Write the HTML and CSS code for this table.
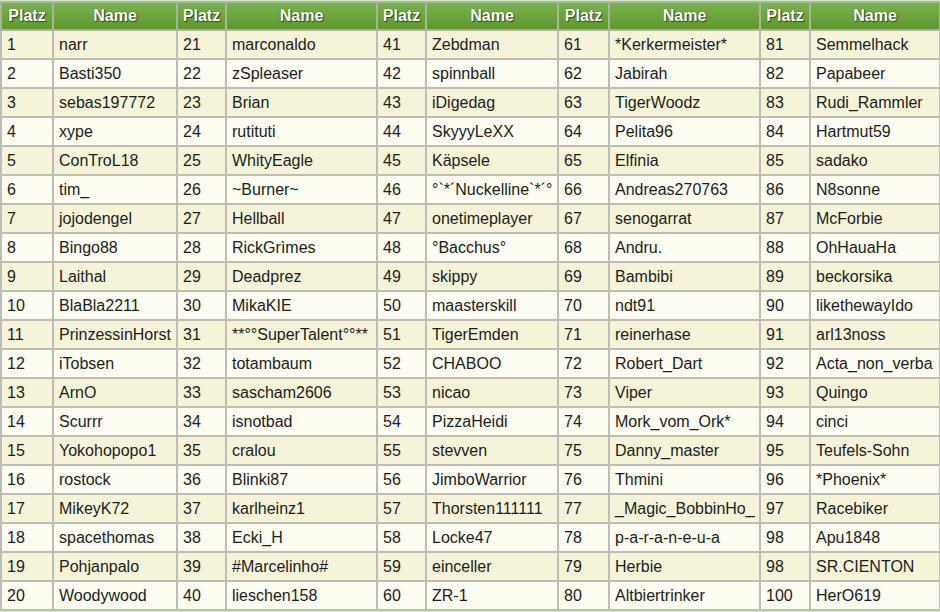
FILE: index.html
```html
<!DOCTYPE html>
<html>
<head>
<meta charset="utf-8">
<link rel="stylesheet" href="styles.css">
</head>
<body>
<table class="rank">
<colgroup>
<col class="c-p1"><col class="c-n1"><col class="c-p2"><col class="c-n2"><col class="c-p3"><col class="c-n3"><col class="c-p4"><col class="c-n4"><col class="c-p5"><col class="c-n5">
</colgroup>
<thead>
<tr><th>Platz</th><th>Name</th><th>Platz</th><th>Name</th><th>Platz</th><th>Name</th><th>Platz</th><th>Name</th><th>Platz</th><th>Name</th></tr>
</thead>
<tbody>
<tr><td>1</td><td>narr</td><td>21</td><td>marconaldo</td><td>41</td><td>Zebdman</td><td>61</td><td>*Kerkermeister*</td><td>81</td><td>Semmelhack</td></tr>
<tr><td>2</td><td>Basti350</td><td>22</td><td>zSpleaser</td><td>42</td><td>spinnball</td><td>62</td><td>Jabirah</td><td>82</td><td>Papabeer</td></tr>
<tr><td>3</td><td>sebas197772</td><td>23</td><td>Brian</td><td>43</td><td>iDigedag</td><td>63</td><td>TigerWoodz</td><td>83</td><td>Rudi_Rammler</td></tr>
<tr><td>4</td><td>xype</td><td>24</td><td>rutituti</td><td>44</td><td>SkyyyLeXX</td><td>64</td><td>Pelita96</td><td>84</td><td>Hartmut59</td></tr>
<tr><td>5</td><td>ConTroL18</td><td>25</td><td>WhityEagle</td><td>45</td><td>Käpsele</td><td>65</td><td>Elfinia</td><td>85</td><td>sadako</td></tr>
<tr><td>6</td><td>tim_</td><td>26</td><td>~Burner~</td><td>46</td><td>°`*´Nuckelline`*´°</td><td>66</td><td>Andreas270763</td><td>86</td><td>N8sonne</td></tr>
<tr><td>7</td><td>jojodengel</td><td>27</td><td>Hellball</td><td>47</td><td>onetimeplayer</td><td>67</td><td>senogarrat</td><td>87</td><td>McForbie</td></tr>
<tr><td>8</td><td>Bingo88</td><td>28</td><td>RickGrìmes</td><td>48</td><td>°Bacchus°</td><td>68</td><td>Andru.</td><td>88</td><td>OhHauaHa</td></tr>
<tr><td>9</td><td>Laithal</td><td>29</td><td>Deadprez</td><td>49</td><td>skippy</td><td>69</td><td>Bambibi</td><td>89</td><td>beckorsika</td></tr>
<tr><td>10</td><td>BlaBla2211</td><td>30</td><td>MikaKIE</td><td>50</td><td>maasterskill</td><td>70</td><td>ndt91</td><td>90</td><td>likethewayIdo</td></tr>
<tr><td>11</td><td>PrinzessinHorst</td><td>31</td><td>**°°SuperTalent°°**</td><td>51</td><td>TigerEmden</td><td>71</td><td>reinerhase</td><td>91</td><td>arl13noss</td></tr>
<tr><td>12</td><td>iTobsen</td><td>32</td><td>totambaum</td><td>52</td><td>CHABOO</td><td>72</td><td>Robert_Dart</td><td>92</td><td>Acta_non_verba</td></tr>
<tr><td>13</td><td>ArnO</td><td>33</td><td>sascham2606</td><td>53</td><td>nicao</td><td>73</td><td>Viper</td><td>93</td><td>Quingo</td></tr>
<tr><td>14</td><td>Scurrr</td><td>34</td><td>isnotbad</td><td>54</td><td>PizzaHeidi</td><td>74</td><td>Mork_vom_Ork*</td><td>94</td><td>cinci</td></tr>
<tr><td>15</td><td>Yokohopopo1</td><td>35</td><td>cralou</td><td>55</td><td>stevven</td><td>75</td><td>Danny_master</td><td>95</td><td>Teufels-Sohn</td></tr>
<tr><td>16</td><td>rostock</td><td>36</td><td>Blinki87</td><td>56</td><td>JimboWarrior</td><td>76</td><td>Thmini</td><td>96</td><td>*Phoenix*</td></tr>
<tr><td>17</td><td>MikeyK72</td><td>37</td><td>karlheinz1</td><td>57</td><td>Thorsten111111</td><td>77</td><td>_Magic_BobbinHo_</td><td>97</td><td>Racebiker</td></tr>
<tr><td>18</td><td>spacethomas</td><td>38</td><td>Ecki_H</td><td>58</td><td>Locke47</td><td>78</td><td>p-a-r-a-n-e-u-a</td><td>98</td><td>Apu1848</td></tr>
<tr><td>19</td><td>Pohjanpalo</td><td>39</td><td>#Marcelinho#</td><td>59</td><td>einceller</td><td>79</td><td>Herbie</td><td>98</td><td>SR.CIENTON</td></tr>
<tr><td>20</td><td>Woodywood</td><td>40</td><td>lieschen158</td><td>60</td><td>ZR-1</td><td>80</td><td>Altbiertrinker</td><td>100</td><td>HerO619</td></tr>
</tbody>
</table>
</body>
</html>
```
FILE: styles.css
```css
html, body {
  margin: 0;
  padding: 0;
  background: #d4e8c2;
}
body {
  padding-top: 1px;
}
.rank {
  border-collapse: collapse;
  table-layout: fixed;
  width: 939px;
  font-family: "Liberation Sans", Arial, sans-serif;
  font-size: 16px;
  color: #1c1c1c;
}
.c-p1 { width: 52px; }
.c-n1 { width: 124px; }
.c-p2 { width: 49px; }
.c-n2 { width: 151px; }
.c-p3 { width: 49px; }
.c-n3 { width: 132px; }
.c-p4 { width: 51px; }
.c-n4 { width: 151px; }
.c-p5 { width: 50px; }
.c-n5 { width: 130px; }
.rank th, .rank td {
  border: 2px solid #bdbdb5;
  overflow: hidden;
  white-space: nowrap;
}
.rank th {
  height: 26px;
  padding: 0 3px;
  color: #fff;
  font-weight: bold;
  text-align: center;
  background: linear-gradient(#7ab24a, #5e9633);
  text-shadow: 1px 1px 1px #2e4a18, 0 0 1px #2e4a18;
  border-color: #a7b89a;
}
.rank td {
  height: 27px;
  padding: 0 5px;
  text-align: left;
}
.rank tbody tr:nth-child(odd) td {
  background: #f5f4d9;
}
.rank tbody tr:nth-child(even) td {
  background: #fdfdf1;
}
```
